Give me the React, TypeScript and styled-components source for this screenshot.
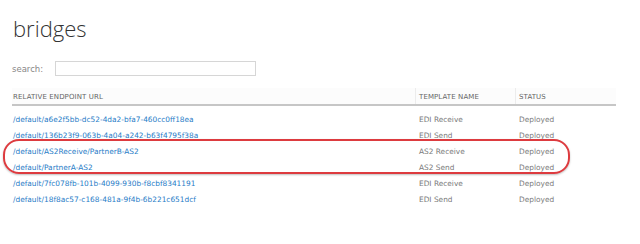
import React from "react";
import styled, { createGlobalStyle } from "styled-components";

const GlobalStyle = createGlobalStyle`
  html, body {
    margin: 0;
    padding: 0;
    background: #fff;
  }
`;

const Page = styled.div`
  width: 640px;
  height: 244px;
  padding: 14px 0 0 12px;
  box-sizing: border-box;
  font-family: "DejaVu Sans", Verdana, sans-serif;
`;

const Title = styled.h1`
  margin: 0 0 0 1px;
  font-family: "Open Sans", "Segoe UI", sans-serif;
  font-weight: 300;
  font-size: 22px;
  line-height: 28px;
  color: #333;
`;

const SearchRow = styled.div`
  display: flex;
  align-items: center;
  gap: 12px;
  margin-top: 19px;
`;

const SearchLabel = styled.span`
  font-size: 8.5px;
  color: #888;
`;

const SearchInput = styled.div`
  width: 199px;
  height: 13px;
  border: 1px solid #d6d6d6;
  background: #fff;
`;

const Table = styled.div`
  position: relative;
  width: 604px;
  margin-top: 12px;
`;

const HeaderRow = styled.div`
  display: grid;
  grid-template-columns: 403px 100px 101px;
  height: 16px;
  border-bottom: 2px solid #c6c6c6;
  background: #fcfcfc;
`;

const HeaderCell = styled.div<{ $divider?: boolean }>`
  display: flex;
  align-items: center;
  padding-left: ${(p) => (p.$divider ? "3px" : "1px")};
  padding-top: 1px;
  border-left: ${(p) => (p.$divider ? "1px solid #ececec" : "none")};
  font-size: 7px;
  letter-spacing: 0.1px;
  color: #666;
  text-transform: uppercase;
`;

const Body = styled.div`
  padding-top: 5px;
`;

const Row = styled.div`
  display: grid;
  grid-template-columns: 403px 100px 101px;
  height: 16px;
  align-items: center;
`;

const LinkCell = styled.a`
  font-size: 7.4px;
  color: #1f7cc7;
  text-decoration: none;
  padding-left: 1px;
`;

const TextCell = styled.span`
  font-size: 7.4px;
  color: #7a7a7a;
  padding-left: 4px;
`;

const Highlight = styled.div`
  position: absolute;
  left: -9px;
  top: 51px;
  width: 563px;
  height: 31px;
  border: 2px solid #dd3b3f;
  border-radius: 16px;
  box-shadow: 0 1px 2px rgba(0, 0, 0, 0.25);
  pointer-events: none;
`;

const rows = [
  ["/default/a6e2f5bb-dc52-4da2-bfa7-460cc0ff18ea", "EDI Receive", "Deployed"],
  ["/default/136b23f9-063b-4a04-a242-b63f4795f38a", "EDI Send", "Deployed"],
  ["/default/AS2Receive/PartnerB-AS2", "AS2 Receive", "Deployed"],
  ["/default/PartnerA-AS2", "AS2 Send", "Deployed"],
  ["/default/7fc078fb-101b-4099-930b-f8cbf8341191", "EDI Receive", "Deployed"],
  ["/default/18f8ac57-c168-481a-9f4b-6b221c651dcf", "EDI Send", "Deployed"],
];

export default function App() {
  return (
    <Page>
      <GlobalStyle />
      <Title>bridges</Title>
      <SearchRow>
        <SearchLabel>search:</SearchLabel>
        <SearchInput />
      </SearchRow>
      <Table>
        <HeaderRow>
          <HeaderCell>Relative Endpoint URL</HeaderCell>
          <HeaderCell $divider>Template Name</HeaderCell>
          <HeaderCell $divider>Status</HeaderCell>
        </HeaderRow>
        <Body>
          {rows.map(([url, template, status]) => (
            <Row key={url}>
              <LinkCell href="#">{url}</LinkCell>
              <TextCell>{template}</TextCell>
              <TextCell>{status}</TextCell>
            </Row>
          ))}
        </Body>
        <Highlight />
      </Table>
    </Page>
  );
}
